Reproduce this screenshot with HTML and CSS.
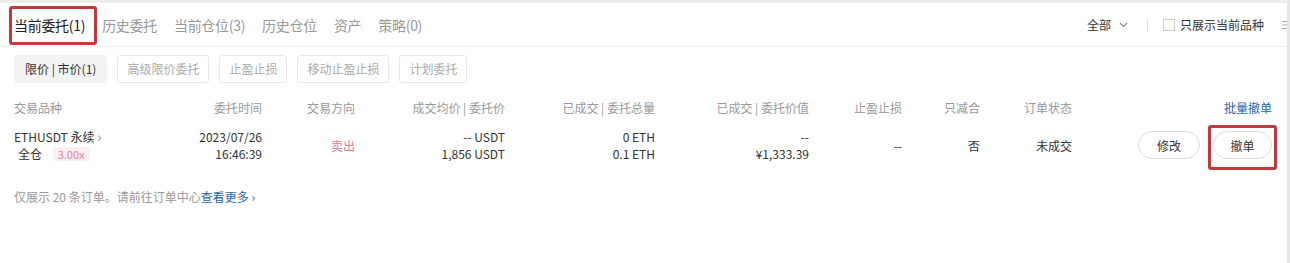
FILE: index.html
```html
<!DOCTYPE html>
<html lang="zh-CN">
<head>
    <meta charset="UTF-8">
    <title>当前委托</title>
    <link rel="stylesheet" href="styles.css">
</head>
<body>
    <div class="page">
        <div class="tabs">
            <div class="tab-list">
                <span class="tab active">当前委托(1)</span>
                <span class="tab">历史委托</span>
                <span class="tab">当前仓位(3)</span>
                <span class="tab">历史仓位</span>
                <span class="tab">资产</span>
                <span class="tab">策略(0)</span>
            </div>
            <div class="tab-tools">
                <span class="filter">全部
                    <svg width="9" height="6" viewBox="0 0 9 6"><path d="M1 1l3.5 3.5L8 1" fill="none" stroke="#888" stroke-width="1.2"/></svg>
                </span>
                <span class="divider"></span>
                <label class="check"><span class="box"></span>只展示当前品种</label>
                <svg class="menu" width="10" height="10" viewBox="0 0 10 10"><path d="M0 1.5h10M0 5h10M0 8.5h10" stroke="#aaa" stroke-width="1"/></svg>
            </div>
        </div>

        <div class="subtabs">
            <span class="subtab active">限价 | 市价(1)</span>
            <span class="subtab">高级限价委托</span>
            <span class="subtab">止盈止损</span>
            <span class="subtab">移动止盈止损</span>
            <span class="subtab">计划委托</span>
        </div>

        <div class="grid head">
            <div class="left">交易品种</div>
            <div>委托时间</div>
            <div>交易方向</div>
            <div>成交均价 | 委托价</div>
            <div>已成交 | 委托总量</div>
            <div>已成交 | 委托价值</div>
            <div>止盈止损</div>
            <div>只减合</div>
            <div>订单状态</div>
            <div class="link">批量撤单</div>
        </div>

        <div class="grid row">
            <div class="left">
                <div class="sym">ETHUSDT 永续 <span class="arrow">›</span></div>
                <div class="margin">全仓 <span class="lev">3.00x</span></div>
            </div>
            <div><div>2023/07/26</div><div>16:46:39</div></div>
            <div class="sell">卖出</div>
            <div><div>-- USDT</div><div>1,856 USDT</div></div>
            <div><div>0 ETH</div><div>0.1 ETH</div></div>
            <div><div>--</div><div>¥1,333.39</div></div>
            <div>--</div>
            <div>否</div>
            <div>未成交</div>
            <div class="actions">
                <button class="btn">修改</button>
                <button class="btn">撤单</button>
            </div>
        </div>

        <p class="note">仅展示 20 条订单。请前往订单中心<span class="more">查看更多 ›</span></p>

        <!-- red marks drawn over the screenshot -->
        <div class="mark mark-tab"></div>
        <div class="mark mark-cancel"></div>
    </div>
</body>
</html>
```

FILE: styles.css
```css
body {
    margin: 0;
    background-color: #fff;
    font-family: "Noto Sans CJK SC", "Noto Sans", sans-serif;
    color: #333;
}
.page {
    position: relative;
    height: 263px;
    border-top: 3px solid #ededed;
    border-right: 3px solid #e6e6e6;
    box-sizing: border-box;
    overflow: hidden;
}
.tabs {
    display: flex;
    justify-content: space-between;
    align-items: center;
    height: 43px;
    padding-left: 14px;
    border-bottom: 1px solid #eee;
}
.tab-list {
    display: flex;
    gap: 17px;
    font-size: 14px;
    letter-spacing: -0.3px;
}
.tab {
    color: #999;
}
.tab.active {
    color: #222;
}
.tab-tools {
    display: flex;
    align-items: center;
    font-size: 12px;
    color: #333;
    margin-right: -5px;
}
.filter {
    display: flex;
    align-items: center;
    gap: 8px;
}
.divider {
    width: 1px;
    height: 12px;
    background-color: #ddd;
    margin: 0 15px 0 19px;
}
.check {
    display: flex;
    align-items: center;
    gap: 5px;
}
.box {
    width: 10px;
    height: 10px;
    border: 1px solid #ccc;
}
.menu {
    margin-left: 18px;
}
.subtabs {
    display: flex;
    gap: 10px;
    margin: 8px 0 0 14px;
}
.subtab {
    height: 26px;
    line-height: 26px;
    padding: 0 9px;
    font-size: 12px;
    color: #aaa;
    border: 1px solid #e8e8e8;
    border-radius: 3px;
}
.subtab.active {
    background-color: #f3f3f3;
    border-color: #f3f3f3;
    color: #333;
    padding: 0 10px;
}
.grid {
    display: grid;
    grid-template-columns: 148px 100px 93px 150px 150px 154px 93px 78px 92px 200px;
    padding-left: 14px;
    font-size: 12px;
    text-align: right;
}
.grid .left {
    text-align: left;
}
.head {
    margin-top: 16px;
    line-height: 17px;
    color: #999;
}
.head .link {
    color: #2a64a8;
}
.row {
    margin-top: 12px;
    line-height: 17px;
    align-items: center;
}
.sym .arrow {
    color: #888;
    font-size: 14px;
}
.margin {
    padding-left: 4px;
}
.lev {
    display: inline-block;
    margin-left: 8px;
    padding: 0 5px;
    line-height: 14px;
    background-color: #fdeef1;
    color: #e2849a;
    font-size: 11px;
}
.sell {
    color: #d8809a;
}
.actions {
    display: flex;
    justify-content: flex-end;
    gap: 13px;
}
.btn {
    width: 62px;
    height: 28px;
    font-family: inherit;
    font-size: 12px;
    color: #333;
    background-color: #fff;
    border: 1px solid #ddd;
    border-radius: 14px;
}
.actions .btn:last-child {
    width: 59px;
}
.note {
    margin: 26px 0 0 14px;
    font-size: 12px;
    color: #999;
}
.more {
    color: #2a64a8;
}
.mark {
    position: absolute;
    border: 3px solid #c0393b;
    border-radius: 3px;
}
.mark-tab {
    left: 9px;
    top: 3px;
    width: 82px;
    height: 33px;
}
.mark-cancel {
    left: 1208px;
    top: 122px;
    width: 63px;
    height: 39px;
}
```
